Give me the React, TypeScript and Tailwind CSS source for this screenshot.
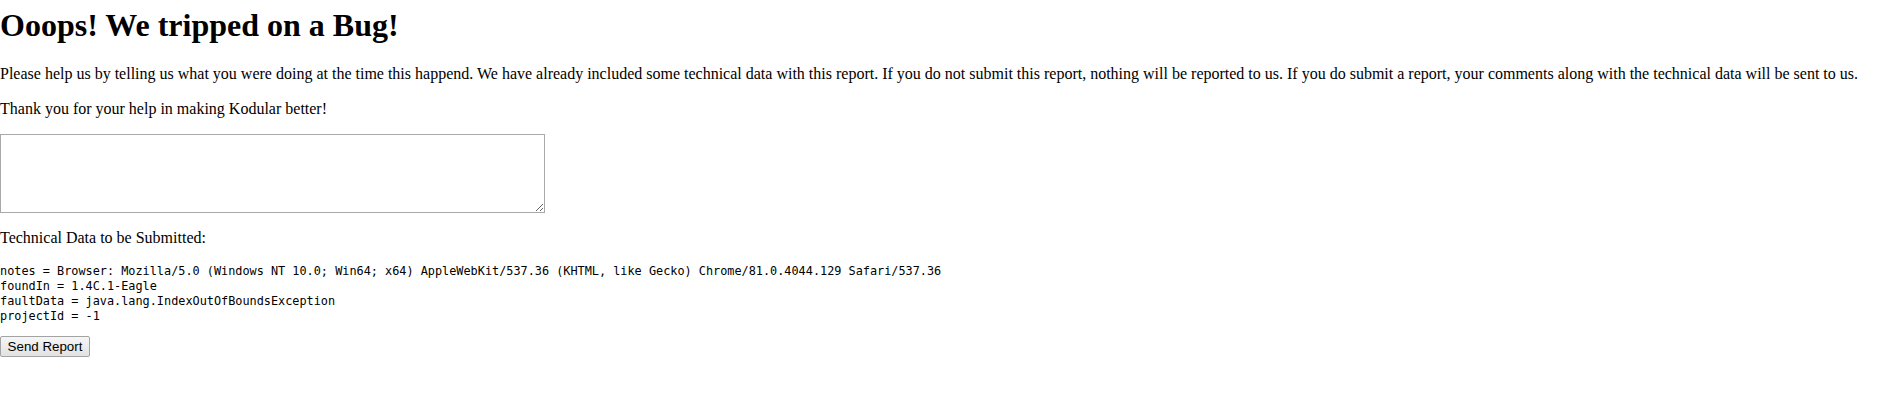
export default function App() {
  return (
    <div className="min-h-screen bg-white text-black font-['Liberation_Serif','Times_New_Roman',serif] text-[16px]">
      <h1 className="pt-[7px] mb-[21px] text-[32px] font-bold leading-[normal]">
        Ooops! We tripped on a Bug!
      </h1>

      <p className="mb-[17px] leading-[normal] whitespace-nowrap">
        Please help us by telling us what you were doing at the time this happend. We have already included some
        technical data with this report. If you do not submit this report, nothing will be reported to us. If you do
        submit a report, your comments along with the technical data will be sent to us.
      </p>
      <p className="leading-[normal]">Thank you for your help in making Kodular better!</p>

      <textarea className="block mt-[16px] w-[545px] h-[79px] border border-[#a9a9a9] bg-white outline-none" />

      <p className="mt-[16px] leading-[normal]">Technical Data to be Submitted:</p>

      <pre className="mt-[17px] font-['DejaVu_Sans_Mono','Liberation_Mono',monospace] text-[11.85px] leading-[15px]">
        {`notes = Browser: Mozilla/5.0 (Windows NT 10.0; Win64; x64) AppleWebKit/537.36 (KHTML, like Gecko) Chrome/81.0.4044.129 Safari/537.36
foundIn = 1.4C.1-Eagle
faultData = java.lang.IndexOutOfBoundsException
projectId = -1`}
      </pre>

      <button className="mt-[12px] h-[21px] w-[90px] px-[6px] border border-[#a3a3a3] rounded-[2px] bg-linear-to-b from-[#f6f6f6] to-[#e2e2e2] font-['Liberation_Sans',Arial,sans-serif] text-[13.33px] leading-[normal]">
        Send Report
      </button>
    </div>
  );
}
